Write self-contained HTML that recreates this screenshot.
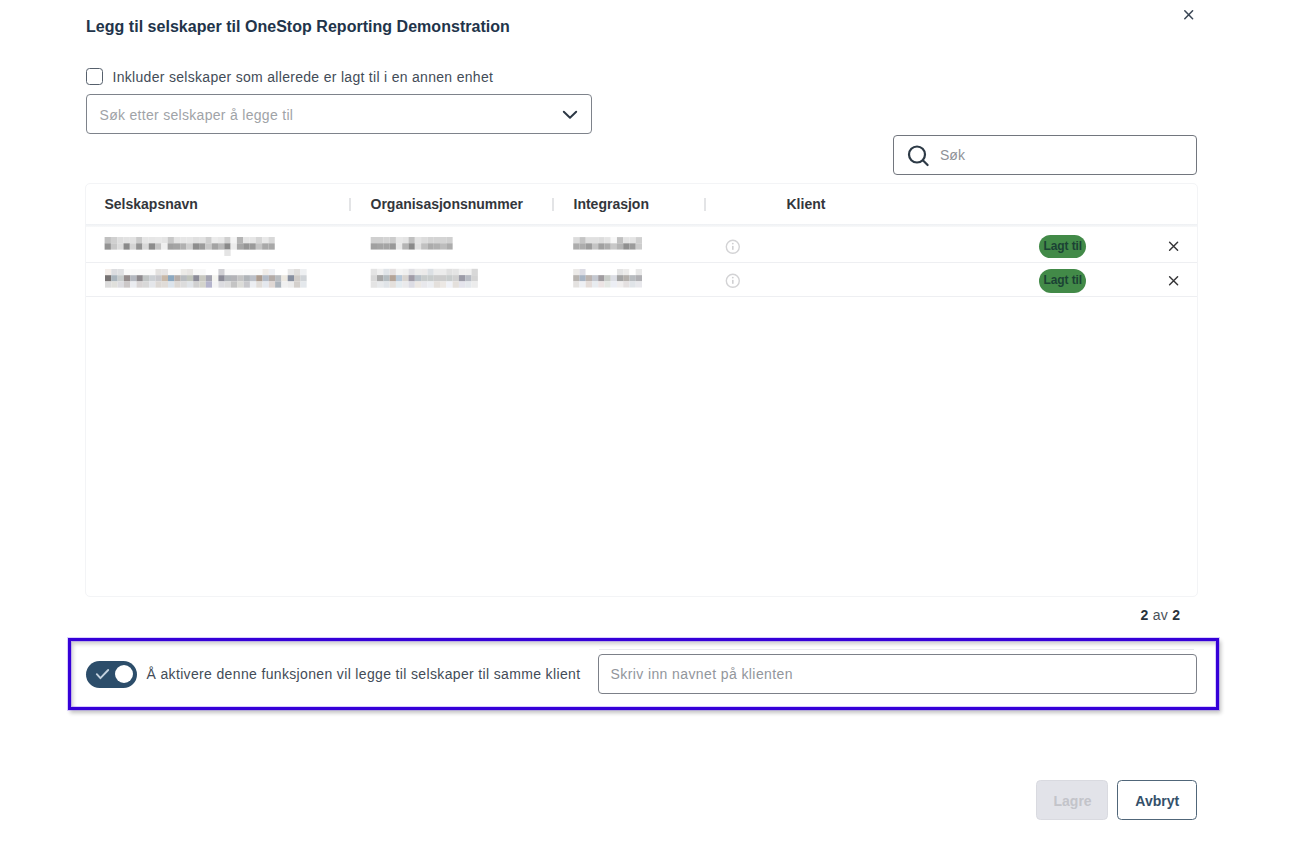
<!DOCTYPE html>
<html><head><meta charset="utf-8">
<style>
html,body{margin:0;padding:0;background:#fff;width:1305px;height:844px;overflow:hidden;position:relative;font-family:"Liberation Sans",sans-serif;}
.a{position:absolute;white-space:nowrap;}
.title{left:86px;top:16.5px;font-size:16px;line-height:20px;font-weight:bold;color:#22344a;letter-spacing:0.03px;}
.lbl{font-size:14px;line-height:18px;color:#434c57;letter-spacing:0.3px;}
.ph{font-size:14px;line-height:18px;color:#a0a3a7;letter-spacing:0.3px;}
.hd{font-size:14px;line-height:18px;font-weight:bold;color:#33363b;}
.box{position:absolute;box-sizing:border-box;}
</style></head><body>
<div class="a title">Legg til selskaper til OneStop Reporting Demonstration</div>
<svg class="a" style="left:1180px;top:6px" width="18" height="18" viewBox="0 0 18 18"><path d="M4.8 4.8L12.6 12.7M12.6 4.8L4.8 12.7" stroke="#3b4756" stroke-width="1.55" stroke-linecap="round"/></svg>

<div class="box" style="left:86px;top:67.6px;width:17.2px;height:17.4px;border:1.8px solid #56606c;border-radius:3.5px;"></div>
<div class="a lbl" style="left:112.5px;top:67.5px;">Inkluder selskaper som allerede er lagt til i en annen enhet</div>

<div class="box" style="left:86px;top:94px;width:506px;height:40.2px;border:1.5px solid #7e838b;border-radius:4px;"></div>
<div class="a ph" style="left:99.5px;top:105.8px;">Søk etter selskaper å legge til</div>
<svg class="a" style="left:560px;top:104.7px" width="20" height="20" viewBox="0 0 20 20"><path d="M3.8 6.8L10 12.8L16.2 6.8" fill="none" stroke="#2c3845" stroke-width="1.95" stroke-linecap="round" stroke-linejoin="round"/></svg>

<div class="box" style="left:893px;top:135px;width:304px;height:40px;border:1.5px solid #72767e;border-radius:4px;"></div>
<svg class="a" style="left:903px;top:142px" width="30" height="28" viewBox="0 0 30 28"><circle cx="14" cy="12.5" r="8" fill="none" stroke="#2d3a46" stroke-width="2.2"/><path d="M19.8 18.3L24.6 23" stroke="#2d3a46" stroke-width="2.2" stroke-linecap="round"/></svg>
<div class="a ph" style="left:940px;top:146px;letter-spacing:0;color:#8f9297;">Søk</div>

<!-- table card -->
<div class="box" style="left:85px;top:183px;width:113px;height:414px;"></div>
<div class="box" style="left:85px;top:183px;width:1113px;height:414px;border:1px solid #f3f4f6;border-radius:5px;"></div>
<div class="box" style="left:86px;top:224px;width:1111px;height:3px;background:linear-gradient(#eef0f3,#f8f9fa);"></div>
<div class="a hd" style="left:104.5px;top:194.8px;">Selskapsnavn</div>
<div class="a hd" style="left:370.5px;top:194.8px;">Organisasjonsnummer</div>
<div class="a hd" style="left:573.5px;top:194.8px;">Integrasjon</div>
<div class="a hd" style="left:786.5px;top:194.8px;">Klient</div>
<div class="box" style="left:349px;top:198px;width:2px;height:12.5px;background:#e3e4e6;"></div>
<div class="box" style="left:551.8px;top:198px;width:2px;height:12.5px;background:#e3e4e6;"></div>
<div class="box" style="left:703.8px;top:198px;width:2px;height:12.5px;background:#e3e4e6;"></div>

<div class="box" style="left:86px;top:262.3px;width:1111px;height:1.2px;background:#eeeff2;"></div>
<div class="box" style="left:86px;top:296.3px;width:1111px;height:1.2px;background:#eeeff2;"></div>

<svg class="a" style="left:0;top:0" width="1305" height="844" viewBox="0 0 1305 844">
<defs><filter id="bl" x="-5%" y="-30%" width="110%" height="160%"><feGaussianBlur stdDeviation="0.45"/></filter></defs><g filter="url(#bl)">
<rect x="104.60" y="237.00" width="6.35" height="6.35" fill="#c0c0c0"/>
<rect x="110.90" y="237.00" width="6.35" height="6.35" fill="#d0d0d0"/>
<rect x="117.20" y="237.00" width="6.35" height="6.35" fill="#dedede"/>
<rect x="123.50" y="237.00" width="6.35" height="6.35" fill="#e2e2e2"/>
<rect x="129.80" y="237.00" width="6.35" height="6.35" fill="#e2e2e2"/>
<rect x="136.10" y="237.00" width="6.35" height="6.35" fill="#cacaca"/>
<rect x="142.40" y="237.00" width="6.35" height="6.35" fill="#e6e6e6"/>
<rect x="148.70" y="237.00" width="6.35" height="6.35" fill="#e6e6e6"/>
<rect x="155.00" y="237.00" width="6.35" height="6.35" fill="#e8e8e8"/>
<rect x="161.30" y="237.00" width="6.35" height="6.35" fill="#e4e4e4"/>
<rect x="167.60" y="237.00" width="6.35" height="6.35" fill="#c8c8c8"/>
<rect x="173.90" y="237.00" width="6.35" height="6.35" fill="#e4e4e4"/>
<rect x="180.20" y="237.00" width="6.35" height="6.35" fill="#e6e6e6"/>
<rect x="186.50" y="237.00" width="6.35" height="6.35" fill="#e6e6e6"/>
<rect x="192.80" y="237.00" width="6.35" height="6.35" fill="#e0e0e0"/>
<rect x="199.10" y="237.00" width="6.35" height="6.35" fill="#e2e2e2"/>
<rect x="205.40" y="237.00" width="6.35" height="6.35" fill="#cfcfcf"/>
<rect x="211.70" y="237.00" width="6.35" height="6.35" fill="#ececec"/>
<rect x="218.00" y="237.00" width="6.35" height="6.35" fill="#e8e8e8"/>
<rect x="224.30" y="237.00" width="6.35" height="6.35" fill="#d0d0d0"/>
<rect x="230.60" y="237.00" width="6.35" height="6.35" fill="#f4f4f4"/>
<rect x="236.90" y="237.00" width="6.35" height="6.35" fill="#b4b4b4"/>
<rect x="243.20" y="237.00" width="6.35" height="6.35" fill="#e6e6e6"/>
<rect x="249.50" y="237.00" width="6.35" height="6.35" fill="#e6e6e6"/>
<rect x="255.80" y="237.00" width="6.35" height="6.35" fill="#d6d6d6"/>
<rect x="262.10" y="237.00" width="6.35" height="6.35" fill="#e8e8e8"/>
<rect x="268.40" y="237.00" width="6.35" height="6.35" fill="#d8d8d8"/>
<rect x="104.60" y="243.30" width="6.35" height="6.35" fill="#939393"/>
<rect x="110.90" y="243.30" width="6.35" height="6.35" fill="#c8c8c8"/>
<rect x="117.20" y="243.30" width="6.35" height="6.35" fill="#dcdcdc"/>
<rect x="123.50" y="243.30" width="6.35" height="6.35" fill="#8a8a8a"/>
<rect x="129.80" y="243.30" width="6.35" height="6.35" fill="#d4d4d4"/>
<rect x="136.10" y="243.30" width="6.35" height="6.35" fill="#939393"/>
<rect x="142.40" y="243.30" width="6.35" height="6.35" fill="#d8d8d8"/>
<rect x="148.70" y="243.30" width="6.35" height="6.35" fill="#8c8c8c"/>
<rect x="155.00" y="243.30" width="6.35" height="6.35" fill="#c4c4c4"/>
<rect x="161.30" y="243.30" width="6.35" height="6.35" fill="#efefef"/>
<rect x="167.60" y="243.30" width="6.35" height="6.35" fill="#a0a0a0"/>
<rect x="173.90" y="243.30" width="6.35" height="6.35" fill="#a4a4a4"/>
<rect x="180.20" y="243.30" width="6.35" height="6.35" fill="#b0b0b0"/>
<rect x="186.50" y="243.30" width="6.35" height="6.35" fill="#cfcfcf"/>
<rect x="192.80" y="243.30" width="6.35" height="6.35" fill="#8e8e8e"/>
<rect x="199.10" y="243.30" width="6.35" height="6.35" fill="#9c9c9c"/>
<rect x="205.40" y="243.30" width="6.35" height="6.35" fill="#c8c8c8"/>
<rect x="211.70" y="243.30" width="6.35" height="6.35" fill="#a4a4a4"/>
<rect x="218.00" y="243.30" width="6.35" height="6.35" fill="#b8b8b8"/>
<rect x="224.30" y="243.30" width="6.35" height="6.35" fill="#8a8a8a"/>
<rect x="230.60" y="243.30" width="6.35" height="6.35" fill="#ececec"/>
<rect x="236.90" y="243.30" width="6.35" height="6.35" fill="#a6a6a6"/>
<rect x="243.20" y="243.30" width="6.35" height="6.35" fill="#959595"/>
<rect x="249.50" y="243.30" width="6.35" height="6.35" fill="#9a9a9a"/>
<rect x="255.80" y="243.30" width="6.35" height="6.35" fill="#c4c4c4"/>
<rect x="262.10" y="243.30" width="6.35" height="6.35" fill="#a8a8a8"/>
<rect x="268.40" y="243.30" width="6.35" height="6.35" fill="#a8a8a8"/>
<rect x="224.30" y="249.60" width="6.35" height="6.35" fill="#e4e4e4"/>
<rect x="105.00" y="269.00" width="6.35" height="6.25" fill="#f4eeea"/>
<rect x="111.30" y="269.00" width="6.35" height="6.25" fill="#dcdde0"/>
<rect x="117.60" y="269.00" width="6.35" height="6.25" fill="#dfe0e2"/>
<rect x="123.90" y="269.00" width="6.35" height="6.25" fill="#fafafa"/>
<rect x="130.20" y="269.00" width="6.35" height="6.25" fill="#fafafa"/>
<rect x="136.50" y="269.00" width="6.35" height="6.25" fill="#fafafa"/>
<rect x="142.80" y="269.00" width="6.35" height="6.25" fill="#fafafa"/>
<rect x="149.10" y="269.00" width="6.35" height="6.25" fill="#fafafa"/>
<rect x="155.40" y="269.00" width="6.35" height="6.25" fill="#e4e2e0"/>
<rect x="161.70" y="269.00" width="6.35" height="6.25" fill="#e6e4e4"/>
<rect x="168.00" y="269.00" width="6.35" height="6.25" fill="#fafafa"/>
<rect x="174.30" y="269.00" width="6.35" height="6.25" fill="#fafafa"/>
<rect x="180.60" y="269.00" width="6.35" height="6.25" fill="#ecebe8"/>
<rect x="186.90" y="269.00" width="6.35" height="6.25" fill="#e8e6e4"/>
<rect x="193.20" y="269.00" width="6.35" height="6.25" fill="#f8f8f8"/>
<rect x="199.50" y="269.00" width="6.35" height="6.25" fill="#f8f8f8"/>
<rect x="205.80" y="269.00" width="6.35" height="6.25" fill="#ffffff"/>
<rect x="212.10" y="269.00" width="6.35" height="6.25" fill="#ffffff"/>
<rect x="218.40" y="269.00" width="6.35" height="6.25" fill="#d0d0d4"/>
<rect x="224.70" y="269.00" width="6.35" height="6.25" fill="#fafafa"/>
<rect x="231.00" y="269.00" width="6.35" height="6.25" fill="#fafafa"/>
<rect x="237.30" y="269.00" width="6.35" height="6.25" fill="#fafafa"/>
<rect x="243.60" y="269.00" width="6.35" height="6.25" fill="#fafafa"/>
<rect x="249.90" y="269.00" width="6.35" height="6.25" fill="#fafafa"/>
<rect x="256.20" y="269.00" width="6.35" height="6.25" fill="#fafafa"/>
<rect x="262.50" y="269.00" width="6.35" height="6.25" fill="#f0ece8"/>
<rect x="268.80" y="269.00" width="6.35" height="6.25" fill="#eef0f4"/>
<rect x="275.10" y="269.00" width="6.35" height="6.25" fill="#ffffff"/>
<rect x="281.40" y="269.00" width="6.35" height="6.25" fill="#ffffff"/>
<rect x="287.70" y="269.00" width="6.35" height="6.25" fill="#e8e8e8"/>
<rect x="294.00" y="269.00" width="6.35" height="6.25" fill="#e0dedc"/>
<rect x="300.30" y="269.00" width="6.35" height="6.25" fill="#eef0f2"/>
<rect x="105.00" y="275.20" width="6.35" height="6.25" fill="#777373"/>
<rect x="111.30" y="275.20" width="6.35" height="6.25" fill="#aab5bd"/>
<rect x="117.60" y="275.20" width="6.35" height="6.25" fill="#c8cccc"/>
<rect x="123.90" y="275.20" width="6.35" height="6.25" fill="#948c8c"/>
<rect x="130.20" y="275.20" width="6.35" height="6.25" fill="#b4b8c0"/>
<rect x="136.50" y="275.20" width="6.35" height="6.25" fill="#8e8a8e"/>
<rect x="142.80" y="275.20" width="6.35" height="6.25" fill="#c0c4c4"/>
<rect x="149.10" y="275.20" width="6.35" height="6.25" fill="#ccd0d4"/>
<rect x="155.40" y="275.20" width="6.35" height="6.25" fill="#c8c8cc"/>
<rect x="161.70" y="275.20" width="6.35" height="6.25" fill="#c8b8a8"/>
<rect x="168.00" y="275.20" width="6.35" height="6.25" fill="#8ca8c0"/>
<rect x="174.30" y="275.20" width="6.35" height="6.25" fill="#b4aca8"/>
<rect x="180.60" y="275.20" width="6.35" height="6.25" fill="#b8bcc0"/>
<rect x="186.90" y="275.20" width="6.35" height="6.25" fill="#c0c4bc"/>
<rect x="193.20" y="275.20" width="6.35" height="6.25" fill="#8c8c98"/>
<rect x="199.50" y="275.20" width="6.35" height="6.25" fill="#c8c8c0"/>
<rect x="205.80" y="275.20" width="6.35" height="6.25" fill="#a4a4b0"/>
<rect x="212.10" y="275.20" width="6.35" height="6.25" fill="#f4f4f0"/>
<rect x="218.40" y="275.20" width="6.35" height="6.25" fill="#8c8c98"/>
<rect x="224.70" y="275.20" width="6.35" height="6.25" fill="#b0b4b8"/>
<rect x="231.00" y="275.20" width="6.35" height="6.25" fill="#b4b4b8"/>
<rect x="237.30" y="275.20" width="6.35" height="6.25" fill="#c4c4c4"/>
<rect x="243.60" y="275.20" width="6.35" height="6.25" fill="#b0b4b8"/>
<rect x="249.90" y="275.20" width="6.35" height="6.25" fill="#bcc0c8"/>
<rect x="256.20" y="275.20" width="6.35" height="6.25" fill="#ac9c90"/>
<rect x="262.50" y="275.20" width="6.35" height="6.25" fill="#b4bcc8"/>
<rect x="268.80" y="275.20" width="6.35" height="6.25" fill="#b4aca8"/>
<rect x="275.10" y="275.20" width="6.35" height="6.25" fill="#b8bcc0"/>
<rect x="281.40" y="275.20" width="6.35" height="6.25" fill="#ece8e0"/>
<rect x="287.70" y="275.20" width="6.35" height="6.25" fill="#8890a0"/>
<rect x="294.00" y="275.20" width="6.35" height="6.25" fill="#d0ccc8"/>
<rect x="300.30" y="275.20" width="6.35" height="6.25" fill="#d0d4d8"/>
<rect x="105.00" y="281.40" width="6.35" height="6.25" fill="#dcdcdc"/>
<rect x="111.30" y="281.40" width="6.35" height="6.25" fill="#e0e0dc"/>
<rect x="117.60" y="281.40" width="6.35" height="6.25" fill="#dcdce0"/>
<rect x="123.90" y="281.40" width="6.35" height="6.25" fill="#ccc8c8"/>
<rect x="130.20" y="281.40" width="6.35" height="6.25" fill="#eaecf0"/>
<rect x="136.50" y="281.40" width="6.35" height="6.25" fill="#d8d4d4"/>
<rect x="142.80" y="281.40" width="6.35" height="6.25" fill="#d8d8d8"/>
<rect x="149.10" y="281.40" width="6.35" height="6.25" fill="#e4e6ea"/>
<rect x="155.40" y="281.40" width="6.35" height="6.25" fill="#dcd8d4"/>
<rect x="161.70" y="281.40" width="6.35" height="6.25" fill="#e0dcd8"/>
<rect x="168.00" y="281.40" width="6.35" height="6.25" fill="#dce4ec"/>
<rect x="174.30" y="281.40" width="6.35" height="6.25" fill="#dcd8d4"/>
<rect x="180.60" y="281.40" width="6.35" height="6.25" fill="#dcdcdc"/>
<rect x="186.90" y="281.40" width="6.35" height="6.25" fill="#e0e4e8"/>
<rect x="193.20" y="281.40" width="6.35" height="6.25" fill="#d0d0d0"/>
<rect x="199.50" y="281.40" width="6.35" height="6.25" fill="#d4d4cc"/>
<rect x="205.80" y="281.40" width="6.35" height="6.25" fill="#b4b4cc"/>
<rect x="212.10" y="281.40" width="6.35" height="6.25" fill="#f4f4f4"/>
<rect x="218.40" y="281.40" width="6.35" height="6.25" fill="#dcdce0"/>
<rect x="224.70" y="281.40" width="6.35" height="6.25" fill="#dcdcdc"/>
<rect x="231.00" y="281.40" width="6.35" height="6.25" fill="#c4c4c4"/>
<rect x="237.30" y="281.40" width="6.35" height="6.25" fill="#dcdcd8"/>
<rect x="243.60" y="281.40" width="6.35" height="6.25" fill="#c8c8cc"/>
<rect x="249.90" y="281.40" width="6.35" height="6.25" fill="#eceef2"/>
<rect x="256.20" y="281.40" width="6.35" height="6.25" fill="#e0dcd8"/>
<rect x="262.50" y="281.40" width="6.35" height="6.25" fill="#e4e8ee"/>
<rect x="268.80" y="281.40" width="6.35" height="6.25" fill="#e0d8d4"/>
<rect x="275.10" y="281.40" width="6.35" height="6.25" fill="#acb4bc"/>
<rect x="281.40" y="281.40" width="6.35" height="6.25" fill="#f0f0f0"/>
<rect x="287.70" y="281.40" width="6.35" height="6.25" fill="#ececec"/>
<rect x="294.00" y="281.40" width="6.35" height="6.25" fill="#d4d0cc"/>
<rect x="300.30" y="281.40" width="6.35" height="6.25" fill="#e4e8ec"/>
<rect x="370.70" y="237.00" width="6.35" height="6.30" fill="#d0d0d0"/>
<rect x="377.00" y="237.00" width="6.35" height="6.30" fill="#d0d0d0"/>
<rect x="383.30" y="237.00" width="6.35" height="6.30" fill="#d4d4d4"/>
<rect x="389.60" y="237.00" width="6.35" height="6.30" fill="#cccccc"/>
<rect x="395.90" y="237.00" width="6.35" height="6.30" fill="#e8e8e8"/>
<rect x="402.20" y="237.00" width="6.35" height="6.30" fill="#e4e4e4"/>
<rect x="408.50" y="237.00" width="6.35" height="6.30" fill="#c0c0c0"/>
<rect x="414.80" y="237.00" width="6.35" height="6.30" fill="#e4e4e4"/>
<rect x="421.10" y="237.00" width="6.35" height="6.30" fill="#dcdcdc"/>
<rect x="427.40" y="237.00" width="6.35" height="6.30" fill="#d4d4d4"/>
<rect x="433.70" y="237.00" width="6.35" height="6.30" fill="#d4d4d4"/>
<rect x="440.00" y="237.00" width="6.35" height="6.30" fill="#d4d4d4"/>
<rect x="446.30" y="237.00" width="6.35" height="6.30" fill="#d0d0d0"/>
<rect x="370.70" y="243.25" width="6.35" height="6.30" fill="#a0a0a0"/>
<rect x="377.00" y="243.25" width="6.35" height="6.30" fill="#a4a4a4"/>
<rect x="383.30" y="243.25" width="6.35" height="6.30" fill="#a4a4a4"/>
<rect x="389.60" y="243.25" width="6.35" height="6.30" fill="#989898"/>
<rect x="395.90" y="243.25" width="6.35" height="6.30" fill="#e8e8e8"/>
<rect x="402.20" y="243.25" width="6.35" height="6.30" fill="#b4b4b4"/>
<rect x="408.50" y="243.25" width="6.35" height="6.30" fill="#8a8a8a"/>
<rect x="414.80" y="243.25" width="6.35" height="6.30" fill="#e0e0e0"/>
<rect x="421.10" y="243.25" width="6.35" height="6.30" fill="#c0c0c0"/>
<rect x="427.40" y="243.25" width="6.35" height="6.30" fill="#ababab"/>
<rect x="433.70" y="243.25" width="6.35" height="6.30" fill="#b0b0b0"/>
<rect x="440.00" y="243.25" width="6.35" height="6.30" fill="#bcbcbc"/>
<rect x="446.30" y="243.25" width="6.35" height="6.30" fill="#acacac"/>
<rect x="370.70" y="268.80" width="6.35" height="6.35" fill="#e4e4e4"/>
<rect x="377.00" y="268.80" width="6.35" height="6.35" fill="#f0f0f0"/>
<rect x="383.30" y="268.80" width="6.35" height="6.35" fill="#e0e4e8"/>
<rect x="389.60" y="268.80" width="6.35" height="6.35" fill="#e4e0e0"/>
<rect x="395.90" y="268.80" width="6.35" height="6.35" fill="#f4f4f4"/>
<rect x="402.20" y="268.80" width="6.35" height="6.35" fill="#f0f0f0"/>
<rect x="408.50" y="268.80" width="6.35" height="6.35" fill="#e0e0e4"/>
<rect x="414.80" y="268.80" width="6.35" height="6.35" fill="#ececec"/>
<rect x="421.10" y="268.80" width="6.35" height="6.35" fill="#eceaea"/>
<rect x="427.40" y="268.80" width="6.35" height="6.35" fill="#dce0e4"/>
<rect x="433.70" y="268.80" width="6.35" height="6.35" fill="#ececec"/>
<rect x="440.00" y="268.80" width="6.35" height="6.35" fill="#ececec"/>
<rect x="446.30" y="268.80" width="6.35" height="6.35" fill="#e0e0e0"/>
<rect x="452.60" y="268.80" width="6.35" height="6.35" fill="#e4e4e4"/>
<rect x="458.90" y="268.80" width="6.35" height="6.35" fill="#f0f0f0"/>
<rect x="465.20" y="268.80" width="6.35" height="6.35" fill="#f0f0f0"/>
<rect x="471.50" y="268.80" width="6.35" height="6.35" fill="#d8d8d8"/>
<rect x="370.70" y="275.10" width="6.35" height="6.35" fill="#d8d8d8"/>
<rect x="377.00" y="275.10" width="6.35" height="6.35" fill="#a8a8a8"/>
<rect x="383.30" y="275.10" width="6.35" height="6.35" fill="#b4bcc0"/>
<rect x="389.60" y="275.10" width="6.35" height="6.35" fill="#b4a498"/>
<rect x="395.90" y="275.10" width="6.35" height="6.35" fill="#b8c8d8"/>
<rect x="402.20" y="275.10" width="6.35" height="6.35" fill="#d8d4d0"/>
<rect x="408.50" y="275.10" width="6.35" height="6.35" fill="#a09ca8"/>
<rect x="414.80" y="275.10" width="6.35" height="6.35" fill="#b8c0c8"/>
<rect x="421.10" y="275.10" width="6.35" height="6.35" fill="#c8cccc"/>
<rect x="427.40" y="275.10" width="6.35" height="6.35" fill="#c8cccc"/>
<rect x="433.70" y="275.10" width="6.35" height="6.35" fill="#cccccc"/>
<rect x="440.00" y="275.10" width="6.35" height="6.35" fill="#cccccc"/>
<rect x="446.30" y="275.10" width="6.35" height="6.35" fill="#c8cccc"/>
<rect x="452.60" y="275.10" width="6.35" height="6.35" fill="#d0d0d0"/>
<rect x="458.90" y="275.10" width="6.35" height="6.35" fill="#9c9ca8"/>
<rect x="465.20" y="275.10" width="6.35" height="6.35" fill="#b8bcc4"/>
<rect x="471.50" y="275.10" width="6.35" height="6.35" fill="#d4d4d4"/>
<rect x="370.70" y="281.40" width="6.35" height="6.35" fill="#e4e4e4"/>
<rect x="377.00" y="281.40" width="6.35" height="6.35" fill="#e8eaec"/>
<rect x="383.30" y="281.40" width="6.35" height="6.35" fill="#e0e4e8"/>
<rect x="389.60" y="281.40" width="6.35" height="6.35" fill="#e4e0dc"/>
<rect x="395.90" y="281.40" width="6.35" height="6.35" fill="#e4ecf0"/>
<rect x="402.20" y="281.40" width="6.35" height="6.35" fill="#eaeaec"/>
<rect x="408.50" y="281.40" width="6.35" height="6.35" fill="#dcdce4"/>
<rect x="414.80" y="281.40" width="6.35" height="6.35" fill="#ece8e4"/>
<rect x="421.10" y="281.40" width="6.35" height="6.35" fill="#e8e8ec"/>
<rect x="427.40" y="281.40" width="6.35" height="6.35" fill="#eceef2"/>
<rect x="433.70" y="281.40" width="6.35" height="6.35" fill="#e4e0dc"/>
<rect x="440.00" y="281.40" width="6.35" height="6.35" fill="#ece8e4"/>
<rect x="446.30" y="281.40" width="6.35" height="6.35" fill="#f0f2f8"/>
<rect x="452.60" y="281.40" width="6.35" height="6.35" fill="#e4e0dc"/>
<rect x="458.90" y="281.40" width="6.35" height="6.35" fill="#e4e4ec"/>
<rect x="465.20" y="281.40" width="6.35" height="6.35" fill="#e4e8ec"/>
<rect x="471.50" y="281.40" width="6.35" height="6.35" fill="#ececec"/>
<rect x="573.20" y="237.10" width="6.30" height="6.25" fill="#dcdcdc"/>
<rect x="579.45" y="237.10" width="6.30" height="6.25" fill="#c4c4c4"/>
<rect x="585.70" y="237.10" width="6.30" height="6.25" fill="#e0e0e0"/>
<rect x="591.95" y="237.10" width="6.30" height="6.25" fill="#e0e0e0"/>
<rect x="598.20" y="237.10" width="6.30" height="6.25" fill="#dcdcdc"/>
<rect x="604.45" y="237.10" width="6.30" height="6.25" fill="#e4e4e4"/>
<rect x="610.70" y="237.10" width="6.30" height="6.25" fill="#f8f8f8"/>
<rect x="616.95" y="237.10" width="6.30" height="6.25" fill="#c0c0c0"/>
<rect x="623.20" y="237.10" width="6.30" height="6.25" fill="#e4e4e4"/>
<rect x="629.45" y="237.10" width="6.30" height="6.25" fill="#e4e4e4"/>
<rect x="635.70" y="237.10" width="6.30" height="6.25" fill="#d0d0d0"/>
<rect x="573.20" y="243.30" width="6.30" height="6.25" fill="#acacac"/>
<rect x="579.45" y="243.30" width="6.30" height="6.25" fill="#acacac"/>
<rect x="585.70" y="243.30" width="6.30" height="6.25" fill="#9c9c9c"/>
<rect x="591.95" y="243.30" width="6.30" height="6.25" fill="#c4c4c4"/>
<rect x="598.20" y="243.30" width="6.30" height="6.25" fill="#a0a0a0"/>
<rect x="604.45" y="243.30" width="6.30" height="6.25" fill="#acacac"/>
<rect x="610.70" y="243.30" width="6.30" height="6.25" fill="#c8c8c8"/>
<rect x="616.95" y="243.30" width="6.30" height="6.25" fill="#b4b4b4"/>
<rect x="623.20" y="243.30" width="6.30" height="6.25" fill="#909090"/>
<rect x="629.45" y="243.30" width="6.30" height="6.25" fill="#9c9c9c"/>
<rect x="635.70" y="243.30" width="6.30" height="6.25" fill="#cccccc"/>
<rect x="573.20" y="269.00" width="6.30" height="6.20" fill="#eceae8"/>
<rect x="579.45" y="269.00" width="6.30" height="6.20" fill="#dcdce4"/>
<rect x="585.70" y="269.00" width="6.30" height="6.20" fill="#ffffff"/>
<rect x="591.95" y="269.00" width="6.30" height="6.20" fill="#ffffff"/>
<rect x="598.20" y="269.00" width="6.30" height="6.20" fill="#ffffff"/>
<rect x="604.45" y="269.00" width="6.30" height="6.20" fill="#ffffff"/>
<rect x="610.70" y="269.00" width="6.30" height="6.20" fill="#ffffff"/>
<rect x="616.95" y="269.00" width="6.30" height="6.20" fill="#e4e4e4"/>
<rect x="623.20" y="269.00" width="6.30" height="6.20" fill="#ecebea"/>
<rect x="629.45" y="269.00" width="6.30" height="6.20" fill="#ffffff"/>
<rect x="635.70" y="269.00" width="6.30" height="6.20" fill="#e8e8e8"/>
<rect x="573.20" y="275.15" width="6.30" height="6.20" fill="#b8b4b0"/>
<rect x="579.45" y="275.15" width="6.30" height="6.20" fill="#a8b4c4"/>
<rect x="585.70" y="275.15" width="6.30" height="6.20" fill="#bcb4b0"/>
<rect x="591.95" y="275.15" width="6.30" height="6.20" fill="#c4c8d0"/>
<rect x="598.20" y="275.15" width="6.30" height="6.20" fill="#a09ca0"/>
<rect x="604.45" y="275.15" width="6.30" height="6.20" fill="#c8ccc8"/>
<rect x="610.70" y="275.15" width="6.30" height="6.20" fill="#dcdee4"/>
<rect x="616.95" y="275.15" width="6.30" height="6.20" fill="#a4a4a4"/>
<rect x="623.20" y="275.15" width="6.30" height="6.20" fill="#b4b0ac"/>
<rect x="629.45" y="275.15" width="6.30" height="6.20" fill="#b8bcc0"/>
<rect x="635.70" y="275.15" width="6.30" height="6.20" fill="#b0b0b4"/>
<rect x="573.20" y="281.30" width="6.30" height="6.20" fill="#e4e2e0"/>
<rect x="579.45" y="281.30" width="6.30" height="6.20" fill="#eef0f4"/>
<rect x="585.70" y="281.30" width="6.30" height="6.20" fill="#e4dcd8"/>
<rect x="591.95" y="281.30" width="6.30" height="6.20" fill="#e8ecf0"/>
<rect x="598.20" y="281.30" width="6.30" height="6.20" fill="#ece4e4"/>
<rect x="604.45" y="281.30" width="6.30" height="6.20" fill="#e4e8e4"/>
<rect x="610.70" y="281.30" width="6.30" height="6.20" fill="#eceef4"/>
<rect x="616.95" y="281.30" width="6.30" height="6.20" fill="#f0eeee"/>
<rect x="623.20" y="281.30" width="6.30" height="6.20" fill="#e4e0e0"/>
<rect x="629.45" y="281.30" width="6.30" height="6.20" fill="#e0e4e8"/>
<rect x="635.70" y="281.30" width="6.30" height="6.20" fill="#e8e8ec"/>
</g>
<g fill="none" stroke="#d3d3d5" stroke-width="1.4"><circle cx="732.8" cy="246.8" r="6.5"/><circle cx="732.8" cy="280.8" r="6.5"/></g>
<g fill="#d0d0d2"><rect x="732" y="245.9" width="1.6" height="3.9"/><circle cx="732.8" cy="243.6" r="0.9"/><rect x="732" y="279.9" width="1.6" height="3.9"/><circle cx="732.8" cy="277.6" r="0.9"/></g>
<g stroke="#363638" stroke-width="1.45" stroke-linecap="round"><path d="M1169.6 242.3L1177.6 250.3M1177.6 242.3L1169.6 250.3"/><path d="M1169.6 276.7L1177.6 284.7M1177.6 276.7L1169.6 284.7"/></g>
</svg>

<div class="box" style="left:1039px;top:234.6px;width:46.6px;height:23.6px;border-radius:12px;background:#428a48;"></div>
<div class="box" style="left:1039px;top:269px;width:46.6px;height:23.6px;border-radius:12px;background:#428a48;"></div>
<div class="a" style="left:1043.5px;top:238.7px;font-size:12px;line-height:14px;font-weight:bold;color:#1b4234;letter-spacing:-0.1px;">Lagt til</div>
<div class="a" style="left:1043.5px;top:272.5px;font-size:12px;line-height:14px;font-weight:bold;color:#1b4234;letter-spacing:-0.1px;">Lagt til</div>

<div class="a" style="left:1140.5px;top:606.2px;font-size:14px;line-height:18px;color:#4a525a;letter-spacing:0.25px;"><b style="color:#2a333c">2</b> av <b style="color:#2a333c">2</b></div>

<!-- highlight box -->
<div class="box" style="left:68px;top:637.9px;width:1151px;height:72.4px;border:3px solid #3500d8;box-shadow:0 0 0 1px rgba(130,90,255,0.28), 2px 3px 4px rgba(0,0,0,0.24), inset 0 0 0 1px rgba(150,110,255,0.35), inset 3px 4px 4px -1px rgba(0,0,0,0.2);"></div>
<div class="box" style="left:599px;top:648.5px;width:595px;height:1.3px;background:#e9ebee;"></div>

<div class="box" style="left:85.6px;top:661px;width:51.7px;height:26.6px;border-radius:14px;background:#2c4d6a;"></div>
<div class="box" style="left:114.5px;top:664.8px;width:18.6px;height:18.6px;border-radius:50%;background:#fff;"></div>
<svg class="a" style="left:94px;top:666px" width="18" height="16" viewBox="0 0 18 16"><path d="M2.8 8.2L6.4 12.2L14.2 4" fill="none" stroke="#c3d1de" stroke-width="1.9" stroke-linecap="round" stroke-linejoin="round"/></svg>
<div class="a lbl" style="left:146.5px;top:664.5px;letter-spacing:0.35px;">Å aktivere denne funksjonen vil legge til selskaper til samme klient</div>

<div class="box" style="left:597.5px;top:654px;width:599.5px;height:39.5px;border:1.5px solid #7c8088;border-radius:4px;"></div>
<div class="a ph" style="left:610.5px;top:664.7px;letter-spacing:0.4px;color:#92969c;">Skriv inn navnet på klienten</div>

<!-- buttons -->
<div class="box" style="left:1036.3px;top:780.2px;width:71.6px;height:39.8px;border-radius:4.5px;background:#e2e3e9;border:1px solid #d9dae0;"></div>
<div class="a" style="left:1053.5px;top:792px;font-size:14px;line-height:18px;font-weight:bold;color:#c3c4ca;">Lagre</div>
<div class="box" style="left:1117.3px;top:780.2px;width:79.6px;height:39.8px;border-radius:4.5px;border:1.8px solid #506679;"></div>
<div class="a" style="left:1135.3px;top:792px;font-size:14px;line-height:18px;font-weight:bold;color:#34506a;">Avbryt</div>
</body></html>
